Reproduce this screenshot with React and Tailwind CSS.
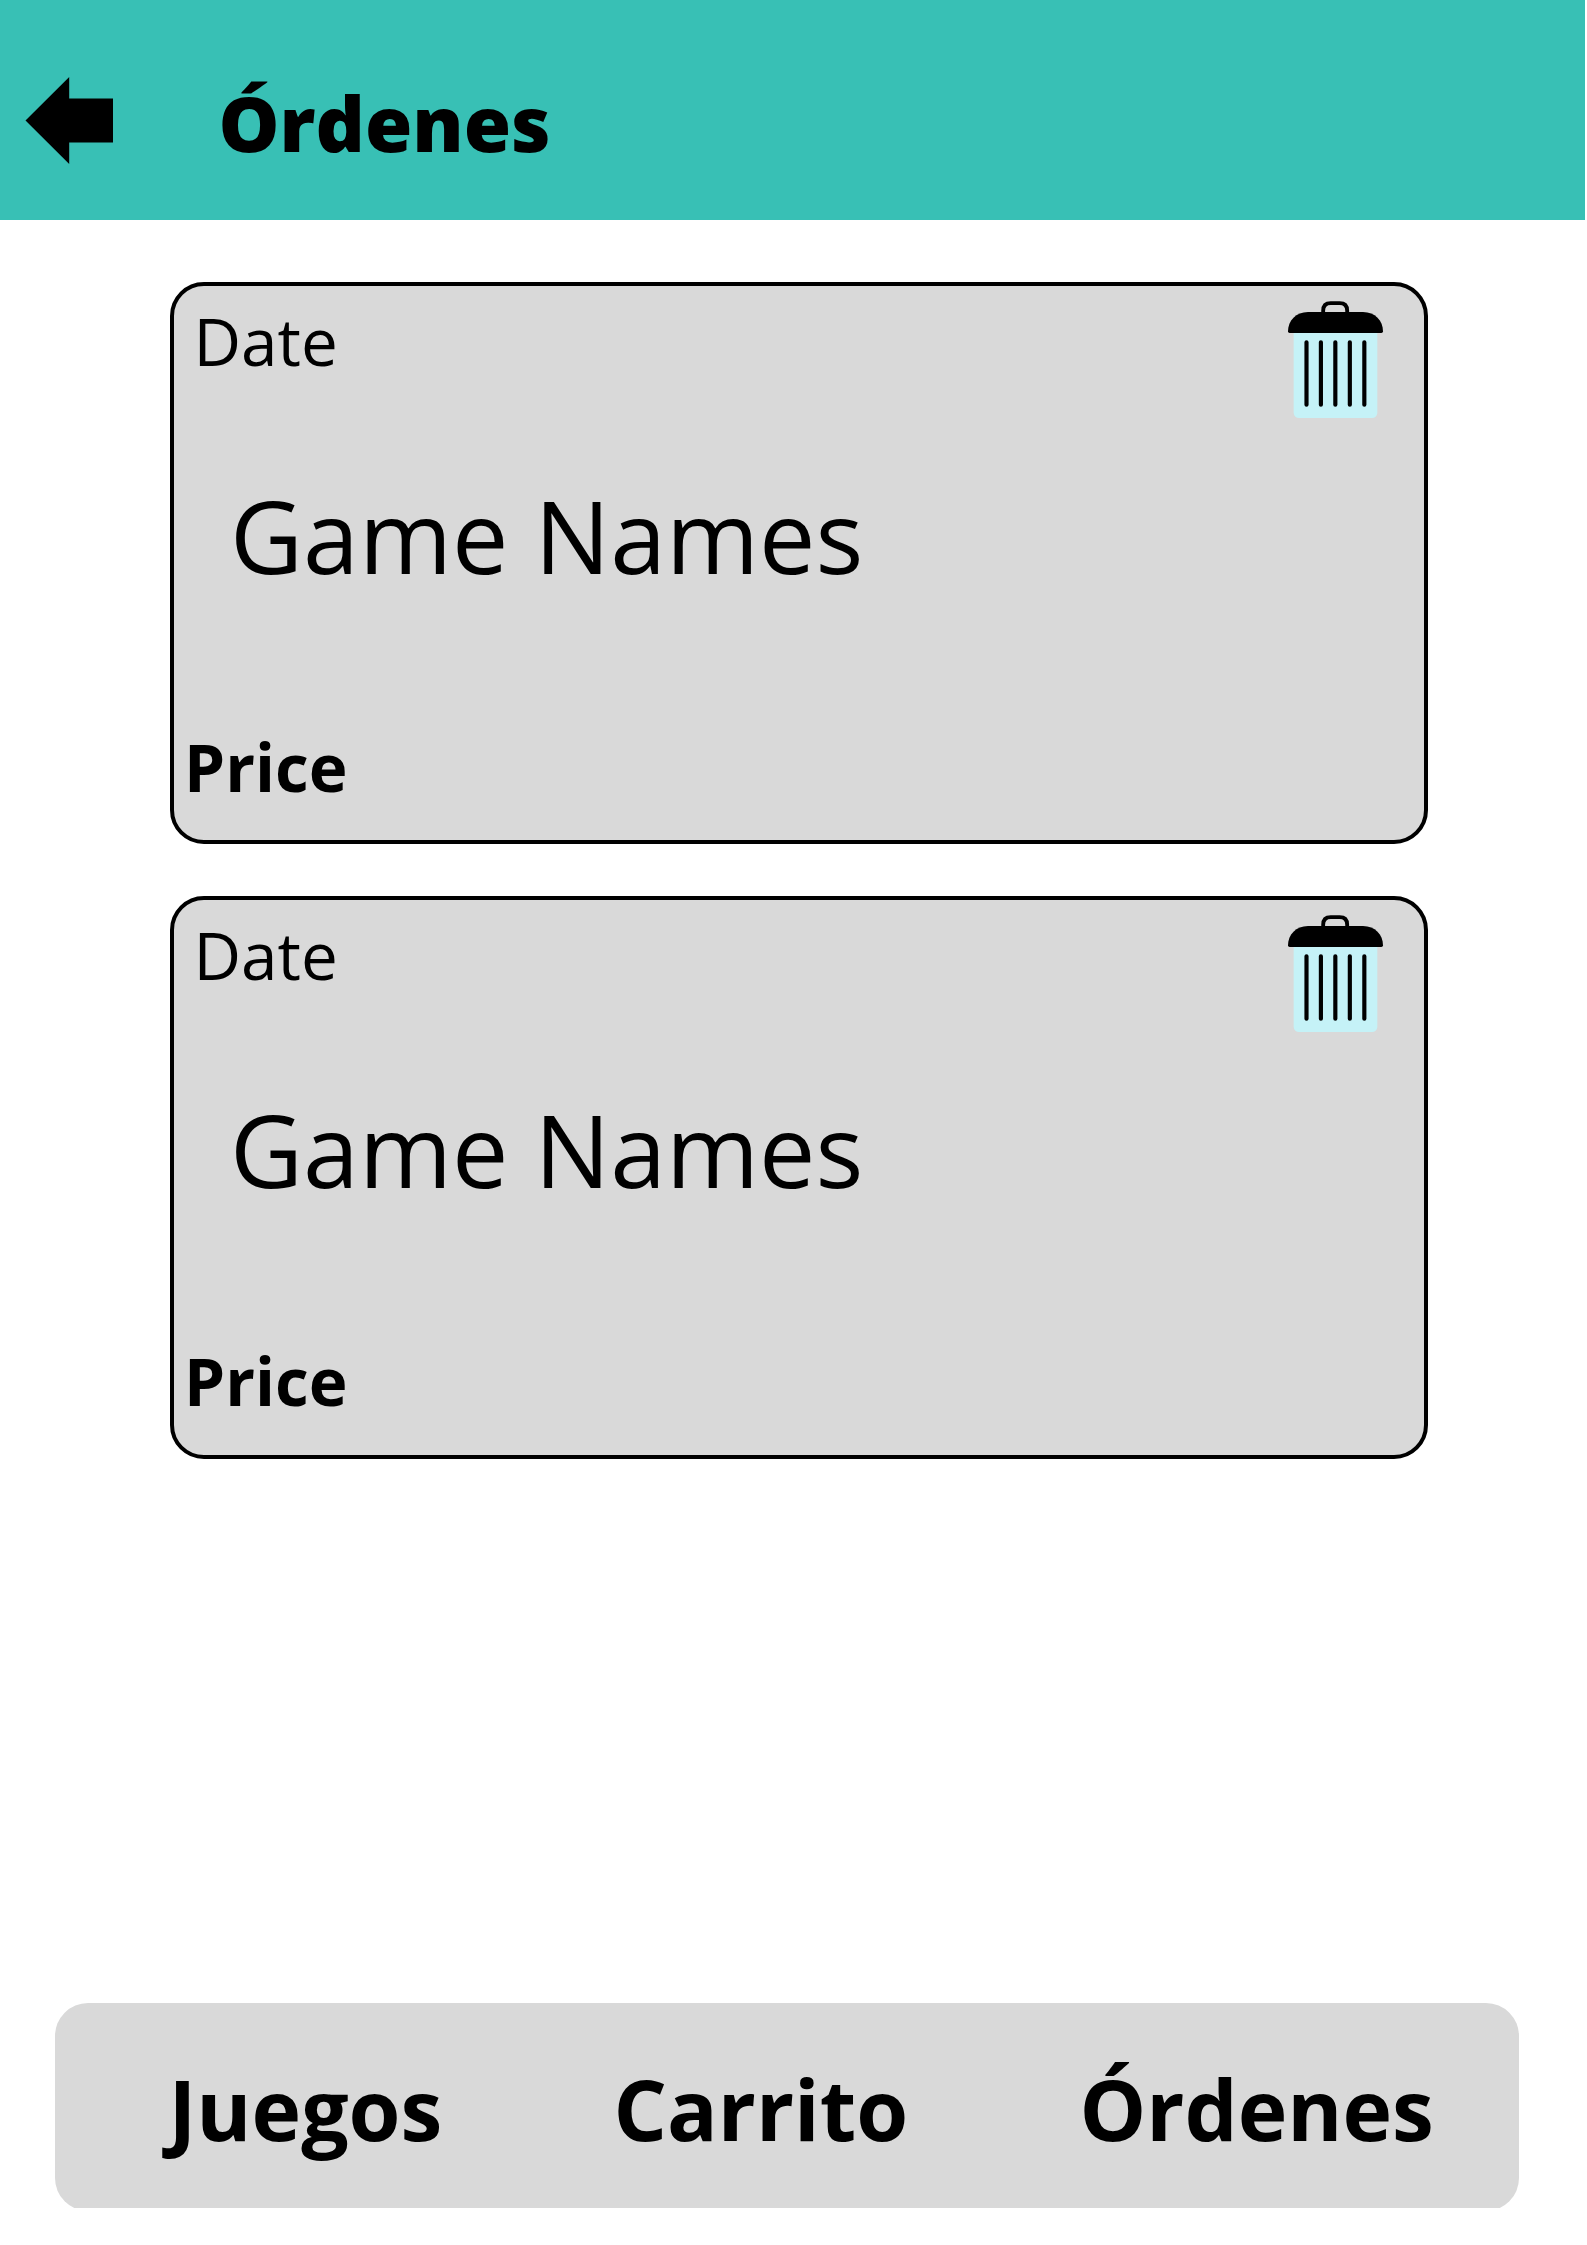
const orders = [
  { date: "Date", games: "Game Names", price: "Price" },
  { date: "Date", games: "Game Names", price: "Price" },
];

function BackArrow() {
  return (
    <svg className="block h-[87px] w-[88px]" viewBox="0 0 88 87" aria-hidden="true">
      <path d="M0.500 43.500 44.200 0V21.500H88V65.500H44.200V87Z" fill="#000" />
    </svg>
  );
}

function TrashIcon() {
  return (
    <svg className="block h-[118px] w-[96px]" viewBox="84 93 288 354" aria-hidden="true">
      <rect x="101" y="170" width="251" height="274" rx="16" fill="#c5f2f7" />
      <path d="M84 184C84 152 108 126 144 126H309C345 126 369 152 369 184Q369 189 364 189H89Q84 189 84 184Z" fill="#000" />
      <path d="M189.500 130V122Q189.500 99.500 212 99.500H239Q261.500 99.500 261.500 122V130" fill="none" stroke="#000" strokeWidth="11.500" />
      <path d="M139.500 217V404M182.700 217V404M226 217V404M269.500 217V404M313 217V404" stroke="#000" strokeWidth="12.500" strokeLinecap="round" />
    </svg>
  );
}

function OrderCard({ order }) {
  return (
    <article className="flex h-[562.400px] w-[1258px] justify-between rounded-[34px] border-4 border-black bg-[#d9d9d9]">
      <div className="flex flex-col items-start whitespace-nowrap leading-none">
        <p className="mt-[22px] ml-[19.500px] text-[65.600px] leading-none">{order.date}</p>
        <h2 className="mt-[111.600px] ml-[56px] text-[100.500px] leading-none">{order.games}</h2>
        <p className="mt-[148px] ml-[10px] text-[65.600px] leading-none font-bold">{order.price}</p>
      </div>
      <button className="mt-[15px] mr-[40px] h-[118px] w-[96px]" aria-label="Delete">
        <TrashIcon />
      </button>
    </article>
  );
}

export default function App() {
  return (
    <div className="flex h-[2245px] w-[1587px] flex-col overflow-hidden bg-white font-['Open_Sans',sans-serif] text-black">
      <header className="flex h-[220px] w-[1585px] shrink-0 items-start bg-[#38c0b5]">
        <button className="mt-[77px] ml-[25px]" aria-label="Back">
          <BackArrow />
        </button>
        <h1 className="mt-[84px] ml-[105.500px] text-[76.700px] leading-none font-extrabold">Órdenes</h1>
      </header>
      <main className="mt-[62px] ml-[170px] flex grow flex-col gap-[51.800px]">
        {orders.map((order, i) => (
          <OrderCard key={i} order={order} />
        ))}
      </main>
      <div className="mb-[36.700px] ml-[54.500px] h-[205.500px] w-[1464.500px] shrink-0 overflow-hidden">
        <nav className="flex h-[208px] items-start rounded-[33px] bg-[#d9d9d9] text-[84px] leading-none font-bold">
          <a className="mt-[64.500px] ml-[114px] w-[445px]">Juegos</a>
          <a className="mt-[64.500px] w-[466px]">Carrito</a>
          <a className="mt-[64.500px]">Órdenes</a>
        </nav>
      </div>
    </div>
  );
}
